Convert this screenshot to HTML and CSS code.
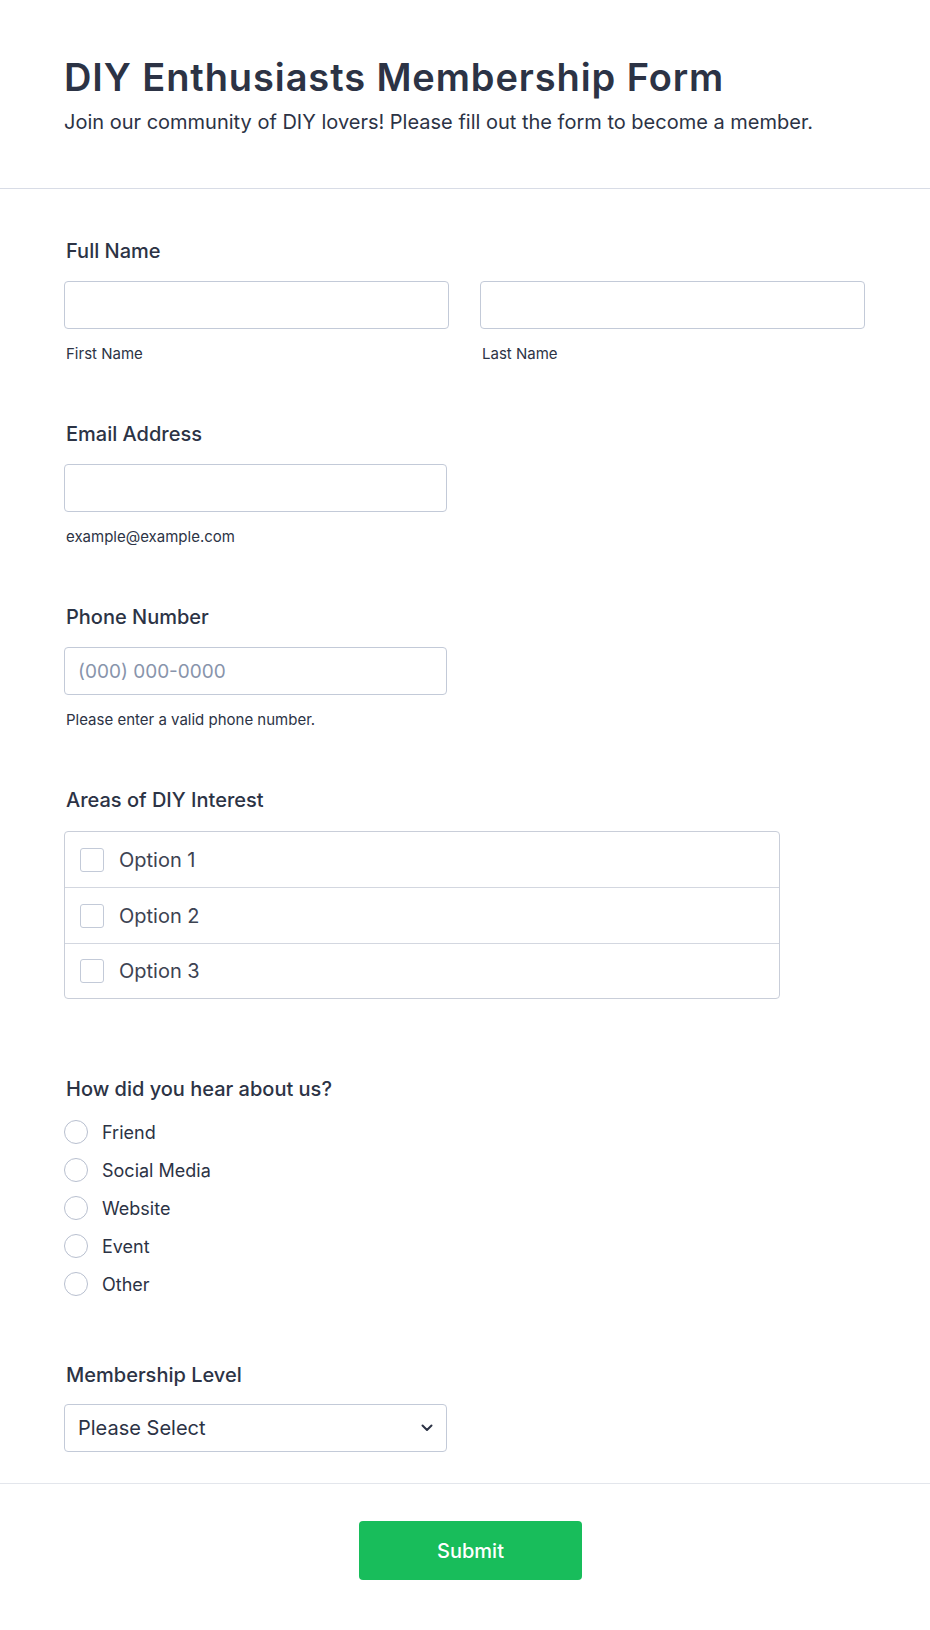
FILE: index.html
```html
<!DOCTYPE html>
<html lang="en">
<head>
<meta charset="utf-8">
<title>DIY Enthusiasts Membership Form</title>
<link rel="stylesheet" href="styles.css">
</head>
<body>
<div class="page">
  <header class="form-header">
    <h1 class="form-title">DIY Enthusiasts Membership Form</h1>
    <p class="form-subtitle">Join our community of DIY lovers! Please fill out the form to become a member.</p>
  </header>

  <main class="form-body">
    <div class="field">
      <div class="field-label">Full Name</div>
      <div class="name-row">
        <div class="name-col">
          <div class="text-input"></div>
          <div class="sublabel">First Name</div>
        </div>
        <div class="name-col">
          <div class="text-input"></div>
          <div class="sublabel">Last Name</div>
        </div>
      </div>
    </div>

    <div class="field">
      <div class="field-label">Email Address</div>
      <div class="text-input half"></div>
      <div class="sublabel">example@example.com</div>
    </div>

    <div class="field">
      <div class="field-label">Phone Number</div>
      <div class="text-input half"><span class="placeholder">(000) 000-0000</span></div>
      <div class="sublabel">Please enter a valid phone number.</div>
    </div>

    <div class="field field-checks">
      <div class="field-label">Areas of DIY Interest</div>
      <div class="check-box">
        <div class="check-row"><span class="check"></span><span class="check-text">Option 1</span></div>
        <div class="check-row"><span class="check"></span><span class="check-text">Option 2</span></div>
        <div class="check-row"><span class="check"></span><span class="check-text">Option 3</span></div>
      </div>
    </div>

    <div class="field field-radios">
      <div class="field-label">How did you hear about us?</div>
      <div class="radio-list">
        <div class="radio-row"><span class="radio"></span><span class="radio-text">Friend</span></div>
        <div class="radio-row"><span class="radio"></span><span class="radio-text">Social Media</span></div>
        <div class="radio-row"><span class="radio"></span><span class="radio-text">Website</span></div>
        <div class="radio-row"><span class="radio"></span><span class="radio-text">Event</span></div>
        <div class="radio-row"><span class="radio"></span><span class="radio-text">Other</span></div>
      </div>
    </div>

    <div class="field field-select">
      <div class="field-label">Membership Level</div>
      <div class="select half">
        <span class="select-text">Please Select</span>
        <svg class="chevron" width="12" height="8" viewBox="0 0 12 8" aria-hidden="true"><path d="M1.5 1.5 L6 6 L10.5 1.5" fill="none" stroke="#2c3345" stroke-width="2" stroke-linecap="round" stroke-linejoin="round"/></svg>
      </div>
    </div>
  </main>

  <footer class="form-footer">
    <button class="submit-btn" type="button">Submit</button>
  </footer>
</div>
</body>
</html>
```

FILE: styles.css
```css
* { box-sizing: border-box; }

html, body {
  margin: 0;
  padding: 0;
  background: #ffffff;
}

body {
  font-family: Inter, "Noto Sans", "Liberation Sans", sans-serif;
  color: #2c3345;
}

.page {
  width: 930px;
}

.form-header {
  padding: 55px 64px 53px 64px;
  border-bottom: 1px solid #d8dce6;
}

.form-title {
  margin: 0;
  font-size: 38px;
  line-height: 45px;
  font-weight: 600;
  letter-spacing: 0.9px;
  color: #2c3345;
}

.form-subtitle {
  margin: 9px 0 0 0;
  font-size: 20px;
  line-height: 26px;
  font-weight: 400;
  color: #2c3345;
}

.form-body {
  padding: 49px 65px 31px 64px;
}

.field {
  margin-bottom: 57px;
}

.field-label {
  font-size: 20px;
  line-height: 26px;
  font-weight: 500;
  color: #2c3345;
  padding-left: 2px;
  margin-bottom: 17px;
}

.name-row {
  display: flex;
  gap: 31px;
}

.name-col {
  width: 385px;
}

.text-input {
  height: 48px;
  border: 1px solid #c3cad8;
  border-radius: 4px;
  background: #fff;
  display: flex;
  align-items: center;
  padding-left: 13px;
}

.half {
  width: 383px;
}

.placeholder {
  font-size: 19px;
  color: #8894ab;
}

.sublabel {
  margin-top: 15px;
  padding-left: 2px;
  font-size: 15px;
  line-height: 20px;
  color: #2c3345;
}

.field-checks {
  margin-bottom: 77px;
}

.field-checks .field-label {
  margin-bottom: 18px;
}

.check-box {
  width: 716px;
  border: 1px solid #c9ced9;
  border-radius: 4px;
}

.check-row {
  box-sizing: content-box;
  height: 55px;
  display: flex;
  align-items: center;
  padding-left: 15px;
  border-top: 1px solid #d3d7e0;
}

.check-row:first-child {
  border-top: none;
}

.check-row:last-child {
  height: 54px;
}

.check {
  width: 24px;
  height: 24px;
  border: 1px solid #c3cad8;
  border-radius: 3px;
  flex-shrink: 0;
}

.check-text {
  margin-left: 15px;
  font-size: 20px;
  color: #3d4352;
}

.field-radios {
  margin-bottom: 59px;
}

.radio-list {
  margin-top: -6px;
}

.radio-row {
  height: 38px;
  display: flex;
  align-items: center;
}

.radio {
  width: 24px;
  height: 24px;
  border: 1px solid #b8bfcf;
  border-radius: 50%;
  flex-shrink: 0;
}

.radio-text {
  margin-left: 14px;
  font-size: 18px;
  color: #2c3345;
}

.field-select {
  margin-bottom: 0;
}

.field-select .field-label {
  margin-bottom: 16px;
}

.select {
  height: 48px;
  border: 1px solid #c3cad8;
  border-radius: 4px;
  display: flex;
  align-items: center;
  justify-content: space-between;
  padding: 0 13px 0 13px;
}

.select-text {
  font-size: 20px;
  color: #2c3345;
}

.chevron {
  display: block;
}

.form-footer {
  border-top: 1px solid #e3e6ec;
  padding: 37px 0 40px 11px;
  display: flex;
  justify-content: center;
}

.submit-btn {
  width: 223px;
  height: 59px;
  border: none;
  border-radius: 4px;
  background: #18bd5b;
  color: #ffffff;
  font-family: Inter, "Noto Sans", "Liberation Sans", sans-serif;
  font-size: 20px;
  font-weight: 500;
  cursor: pointer;
}
```
